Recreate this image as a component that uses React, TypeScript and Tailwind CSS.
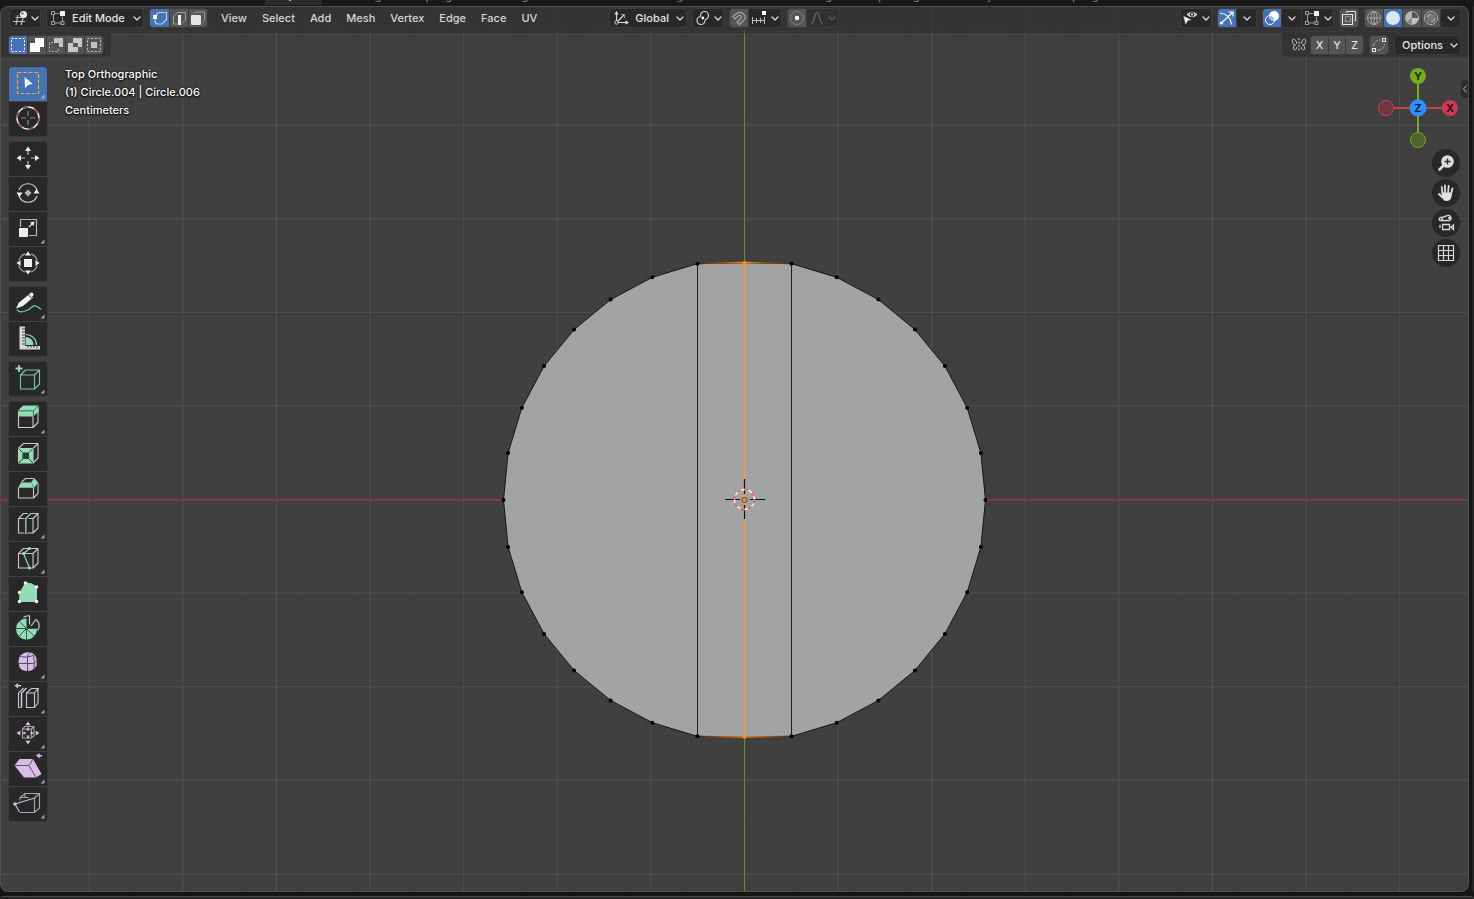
import React from "react";

type Kids = { children?: React.ReactNode };

const GREEN = "#93dcb5";
const LILAC = "#d8bde8";
const WIRE = "#c9c9c9";

/* ---------- shared pieces ---------- */

function Chevron({ dim = false }: { dim?: boolean }) {
  return (
    <svg width="8" height="18" viewBox="0 0 8 18" fill="none" className="shrink-0" aria-hidden="true">
      <path d="M1 8l3 3 3-3" stroke={dim ? "#5c5c5c" : "#d9d9d9"} strokeWidth="1.3" strokeLinecap="round" strokeLinejoin="round" />
    </svg>
  );
}

function Icon({ w = 18, children }: Kids & { w?: number }) {
  return (
    <svg width={w} height="18" viewBox={`0 0 ${w} 18`} fill="none" className="shrink-0" aria-hidden="true">
      {children}
    </svg>
  );
}

function Group({ children, label }: Kids & { label: string }) {
  return (
    <div role="group" aria-label={label} className="flex h-[18px] shrink-0 gap-px overflow-hidden rounded-[3px] bg-[#3a3a3a] ring-1 ring-[#3c3c3c]">
      {children}
    </div>
  );
}

const TONES = {
  blue: "bg-[#4772b3]",
  light: "bg-[#545454]",
  dark: "bg-[#282828]",
  dim: "bg-[#303030]",
};

function Btn({ label, tone = "dark", children, className = "w-[18px]" }: Kids & { label: string; tone?: keyof typeof TONES; className?: string }) {
  return (
    <button type="button" aria-label={label} title={label} className={`flex h-[18px] shrink-0 items-center justify-center ${TONES[tone]} ${className}`}>
      {children}
    </button>
  );
}

/* ---------- header ---------- */

const VertsIcon = () => (
  <Icon>
    <path d="M5.500 4.500h5M4.500 6v6.500M6 14h6.500M13.500 12V7.500" stroke="#9a9a9a" />
    <rect x="2.500" y="2.500" width="3" height="3" stroke="#9a9a9a" />
    <rect x="2.500" y="12.500" width="3" height="3" stroke="#9a9a9a" />
    <rect x="12" y="12.500" width="3" height="3" stroke="#9a9a9a" />
    <rect x="11" y="2" width="5" height="5" fill="#f0f0f0" />
  </Icon>
);

const menus = ["View", "Select", "Add", "Mesh", "Vertex", "Edge", "Face", "UV"];

function Header() {
  return (
    <header className="relative flex h-[27px] items-center bg-[#303030]/75 pb-[3px] pl-[10px] pr-[9px]">
      <Group label="Editor type">
        <Btn label="Editor type" className="w-[30px] gap-[3px]">
          <Icon w={16}>
            <path d="M3.500 8.500h6M1 12.500h12M6 6L4 16M11 9l-2 7" stroke="#bdbdbd" strokeWidth="1.200" />
            <circle cx="11.500" cy="5.500" r="3.500" fill="#ececec" />
            <circle cx="10.500" cy="4.500" r="1.200" fill="#777" />
          </Icon>
          <Chevron />
        </Btn>
      </Group>

      <div className="ml-[7px] flex h-[18px] shrink-0 items-center rounded-[3px] bg-[#282828] px-[2px] ring-1 ring-[#3c3c3c]">
        <VertsIcon />
        <select aria-label="Mode" className="ml-[5px] w-[61px] appearance-none bg-transparent text-[#e3e3e3] outline-none">
          <option>Edit Mode</option>
        </select>
        <Chevron />
      </div>

      <div className="ml-[7px]">
        <Group label="Select mode">
          <Btn label="Vertex select" tone="blue" className="w-[19px]">
            <Icon>
              <path d="M4 8V12q0 3 3 3h4l4.500-4.500V3.500H7.500L4.500 6" stroke="#b9cdec" strokeWidth="1.200" />
              <rect x="2" y="6" width="4" height="4" fill="#fff" />
            </Icon>
          </Btn>
          <Btn label="Edge select" tone="light">
            <Icon>
              <path d="M7 15H3.500V7l4-3.500h8V11L12 14.500" stroke="#9b9b9b" />
              <rect x="8" y="6" width="3" height="10" fill="#f2f2f2" />
            </Icon>
          </Btn>
          <Btn label="Face select" tone="light">
            <Icon>
              <path d="M4 5.500L6.500 3h9v8.500L13 14" stroke="#9b9b9b" />
              <rect x="2" y="6" width="10" height="10" rx="1" fill="#e4e4e4" />
            </Icon>
          </Btn>
        </Group>
      </div>

      <nav aria-label="Mesh editing menus" className="ml-[7px] flex gap-px">
        {menus.map((m) => (
          <button type="button" key={m} className="h-[18px] px-[7px]">{m}</button>
        ))}
      </nav>

      <div className="ml-[66px] flex gap-[7px]">
        <div className="flex h-[18px] items-center rounded-[3px] bg-[#282828] pl-[3px] pr-[2px] ring-1 ring-[#3c3c3c]">
          <Icon>
            <path d="M3.500 13.500V4M2 5.500L3.500 3 5 5.500M3.500 13.500H14M12.500 12l2.500 1.500-2.500 1.500M3.500 13.500L11 6" stroke="#dedede" strokeWidth="1.100" />
            <path d="M8 5.500h3.500V9" stroke="#9c9c9c" />
            <circle cx="3.500" cy="13.500" r="1.700" fill="#282828" stroke="#dedede" />
          </Icon>
          <select aria-label="Transform orientation" className="ml-1 w-[41px] appearance-none bg-transparent text-[#e3e3e3] outline-none">
            <option>Global</option>
          </select>
          <Chevron />
        </div>

        <Group label="Pivot point">
          <Btn label="Pivot point" className="w-[30px] gap-1">
            <Icon w={15}>
              <circle cx="9.500" cy="6.500" r="4" stroke="#d8d8d8" strokeWidth="1.200" />
              <circle cx="6" cy="11.500" r="4" stroke="#d8d8d8" strokeWidth="1.200" />
              <circle cx="7.800" cy="9" r="2.500" fill="#282828" />
              <circle cx="7.800" cy="9" r="1.400" fill="#fff" />
            </Icon>
            <Chevron />
          </Btn>
        </Group>

        <Group label="Snapping">
          <Btn label="Snap" tone="light">
            <Icon>
              <path d="M3 7.500L7 4.200Q11 2 14 5.500T13 12L9.500 15.500 7 13l3.800-3.500Q12 8 11 7T8.500 6.800L5 10Z" stroke="#a9a9a9" strokeWidth="1.200" strokeLinejoin="round" />
            </Icon>
          </Btn>
          <Btn label="Snap to increment" className="w-[32px] gap-1">
            <Icon w={16}>
              <path d="M1.500 8v7M13.500 8v7M5.500 9v5M9.500 9v5M1.500 11.500h12" stroke="#bcbcbc" />
              <rect x="11" y="2" width="4" height="4" fill="#fff" />
            </Icon>
            <Chevron />
          </Btn>
        </Group>

        <Group label="Proportional editing">
          <Btn label="Proportional editing" tone="light">
            <Icon>
              <circle cx="9" cy="9" r="6.500" stroke="#858585" />
              <circle cx="9" cy="9" r="2.200" fill="#fff" />
            </Icon>
          </Btn>
          <Btn label="Falloff" tone="dim" className="w-[31px] gap-1">
            <Icon w={14}>
              <path d="M1 15C4.500 14 4.500 3.500 7 3.500S9.500 14 13 15" stroke="#6a6a6a" strokeWidth="1.200" />
            </Icon>
            <Chevron dim />
          </Btn>
        </Group>
      </div>

      <div className="ml-auto flex gap-[7px]">
        <Group label="Object visibility">
          <Btn label="Object visibility" className="w-[30px] gap-1">
            <Icon w={15}>
              <path d="M3.500 5.500Q9 0 14.500 5.500 9 11 3.500 5.500Z" fill="#e2e2e2" />
              <circle cx="9" cy="5.500" r="2.300" fill="#282828" />
              <circle cx="9" cy="5.500" r="1" fill="#fff" />
              <path d="M0 6.500L9 11 5 11.800 2.500 16Z" fill="#f0f0f0" stroke="#282828" strokeWidth=".5" />
            </Icon>
            <Chevron />
          </Btn>
        </Group>

        <Group label="Gizmos">
          <Btn label="Show gizmos" tone="blue">
            <Icon>
              <path d="M2 4Q12 5 13.500 15.500M4 13.500L14.500 3.500M10.500 3h4.500v4.500" stroke="#fff" strokeWidth="1.200" />
              <circle cx="3.500" cy="14" r="1.500" fill="#fff" />
            </Icon>
          </Btn>
          <Btn label="Gizmo settings" className="w-[19px]"><Chevron /></Btn>
        </Group>

        <Group label="Overlays">
          <Btn label="Show overlays" tone="blue">
            <Icon>
              <circle cx="11" cy="7" r="5" fill="#fff" />
              <path d="M6.300 6.300A5 5 0 0 0 11.700 11.700 5 5 0 0 0 6.300 6.300Z" fill="#9fb9e0" />
              <circle cx="7" cy="11" r="4.500" stroke="#fff" />
            </Icon>
          </Btn>
          <Btn label="Overlay settings" className="w-[19px]"><Chevron /></Btn>
          <Btn label="Mesh edit overlays" className="w-[31px] gap-[3px]">
            <VertsIcon />
            <Chevron />
          </Btn>
        </Group>

        <Group label="X-ray">
          <Btn label="Toggle X-ray" tone="light">
            <Icon>
              <path d="M6.500 4V2.500h9v9H14" stroke="#dcdcdc" />
              <rect x="2.500" y="5.500" width="10" height="10" stroke="#e6e6e6" />
              <path d="M5.500 12.500v-5h5v5Z" stroke="#a9a9a9" strokeDasharray="2 1" />
            </Icon>
          </Btn>
        </Group>

        <Group label="Viewport shading">
          <Btn label="Wireframe" tone="light">
            <Icon>
              <circle cx="9" cy="9" r="6.500" stroke="#a8a8a8" />
              <path d="M2.500 9h13M9 2.500v13" stroke="#a8a8a8" />
              <ellipse cx="9" cy="9" rx="3" ry="6.500" stroke="#a8a8a8" />
            </Icon>
          </Btn>
          <Btn label="Solid" tone="blue">
            <Icon><circle cx="9" cy="9" r="7" fill="#dbe5f5" /></Icon>
          </Btn>
          <Btn label="Material preview" tone="light">
            <Icon>
              <circle cx="9" cy="9" r="6.500" stroke="#ababab" />
              <path d="M9 9V2.500A6.500 6.500 0 0 0 4 13.200Z" fill="#b4b4b4" />
              <path d="M9 9h6.500A6.500 6.500 0 0 1 4.500 13.500Z" fill="#8a8a8a" />
              <path d="M9 9v6.500A6.500 6.500 0 0 0 15.500 9Z" fill="#c2c2c2" />
            </Icon>
          </Btn>
          <Btn label="Rendered" tone="light">
            <Icon>
              <circle cx="9" cy="9" r="6.500" stroke="#b4b4b4" />
              <circle cx="9" cy="9" r="4.800" fill="#777" />
              <path d="M5.500 8Q6 5.500 8.500 5.500M13 9.500Q12.500 12.500 9.500 13" stroke="#c4c4c4" />
            </Icon>
          </Btn>
          <Btn label="Shading settings" className="w-[19px]"><Chevron /></Btn>
        </Group>
      </div>
    </header>
  );
}

function ToolSettings() {
  return (
    <div className="relative flex h-6 items-start justify-between">
      <div className="flex h-6 items-center rounded-br-md bg-[#303030]/75 pl-[9px] pr-2">
        <Group label="Selection operation">
          <Btn label="New selection" tone="blue">
            <Icon><rect x="2.500" y="2.500" width="13" height="13" stroke="#fff" strokeDasharray="2 1.700" /></Icon>
          </Btn>
          <Btn label="Extend" tone="light">
            <Icon><path d="M7 2h9v9h-4v5H2V7h5Z" fill="#fff" /></Icon>
          </Btn>
          <Btn label="Subtract" tone="light">
            <Icon>
              <path d="M7 2h9v9h-4V7H7Z" fill="#c4c4c4" />
              <path d="M6 6.500H2.500v9h9V12" stroke="#b5b5b5" strokeDasharray="2 1.700" />
            </Icon>
          </Btn>
          <Btn label="Invert" tone="light">
            <Icon><path fillRule="evenodd" d="M7 2h9v9h-4v5H2V7h5ZM7 7v4h5V7Z" fill="#c8c8c8" /></Icon>
          </Btn>
          <Btn label="Intersect" tone="light">
            <Icon>
              <rect x="6" y="6" width="6" height="6" fill="#c4c4c4" />
              <rect x="2.500" y="2.500" width="13" height="13" stroke="#c4c4c4" strokeDasharray="2 1.700" />
            </Icon>
          </Btn>
        </Group>
      </div>

      <div className="flex h-6 items-center gap-[7px] rounded-bl-md bg-[#303030]/75 pl-2 pr-[9px]">
        <div className="flex items-center gap-[3px]">
          <Icon>
            <path d="M7 8Q6.500 3.500 3.500 3 1.500 3 2.500 6.500 3 9 5.500 9 2.500 9.500 3.500 13q2 3 3.500-2M11 8q.5-4.500 3.500-5 2 0 1 3.500-.5 2.500-3 2.500 3 .5 2 4-2 3-3.500-2" stroke="#bdbdbd" />
            <path d="M9 2v14" stroke="#dcdcdc" strokeDasharray="2 1.500" />
          </Icon>
          <Group label="Mirror axes">
            <Btn label="X" tone="light" className="w-[17px] text-[#e3e3e3]">X</Btn>
            <Btn label="Y" tone="light" className="w-4 text-[#e3e3e3]">Y</Btn>
            <Btn label="Z" tone="light" className="w-[17px] text-[#e3e3e3]">Z</Btn>
          </Group>
        </div>
        <Group label="Auto merge">
          <Btn label="Auto merge" tone="light">
            <Icon>
              <rect x="2.500" y="12.500" width="3" height="3" stroke="#e8e8e8" />
              <rect x="12.500" y="2.500" width="3" height="3" stroke="#e8e8e8" />
              <path d="M3.500 10Q4 4.500 10.500 4M7.500 14.500Q14 13.500 14.500 8" stroke="#b0b0b0" strokeDasharray="3 1.500" />
            </Icon>
          </Btn>
        </Group>
        <button type="button" className="flex h-[18px] w-[65px] items-center justify-between rounded-[3px] bg-[#282828] pl-[7px] pr-[2px] text-[#e3e3e3] ring-1 ring-[#3c3c3c]">
          Options
          <Chevron />
        </button>
      </div>
    </div>
  );
}

/* ---------- toolbar ---------- */

/* Outline of a cube: front face at (x, y) with side s, back face shifted by d. */
function Cube({ x = 9.5, y = 11.5, s = 14.5, d = 5, c = WIRE }: { x?: number; y?: number; s?: number; d?: number; c?: string }) {
  return (
    <path
      d={`M${x} ${y}h${s}v${s}h${-s}ZM${x} ${y}l${d} ${-d}h${s}l${-d} ${d}M${x + s + d} ${y - d}v${s}l${-d} ${d}`}
      stroke={c}
      strokeWidth="1.1"
      strokeLinejoin="round"
    />
  );
}

/* Four arrow heads around (cx, cy), with the tips at radius r. */
function Arrows({ cx, cy, r, h, w, c }: { cx: number; cy: number; r: number; h: number; w: number; c: string }) {
  return (
    <g fill={c}>
      {[0, 90, 180, 270].map((a) => (
        <path key={a} transform={`rotate(${a} ${cx} ${cy})`} d={`M${cx} ${cy - r}l${w} ${h}h${-2 * w}Z`} />
      ))}
    </g>
  );
}

type Tool = { name: string; more?: boolean; active?: boolean; art: React.ReactNode };

const toolGroups: Tool[][] = [
  [
    {
      name: "Select Box", more: true, active: true,
      art: (
        <>
          <rect x="8.500" y="5.500" width="21" height="21" stroke="#f3a83b" strokeWidth="1.200" strokeDasharray="4 1.600" />
          <path d="M15.500 10L24 17l-4.500.7-3.500 3.500Z" fill="#f2f2f2" />
        </>
      ),
    },
    {
      name: "Cursor",
      art: (
        <>
          <circle cx="19" cy="16" r="11" stroke="#efefef" strokeWidth="1.400" />
          <circle cx="19" cy="16" r="11" stroke="#a04a50" strokeWidth="1.600" strokeDasharray="5.760 5.760" />
          <path d="M12 16h5M21 16H26M19 9v5M19 18V23" stroke="#8a8a8a" strokeWidth="1.200" />
        </>
      ),
    },
  ],
  [
    {
      name: "Move",
      art: (
        <>
          <Arrows cx={19} cy={16} r={11.5} h={4.5} w={3} c="#ececec" />
          <path d="M19 9v4M19 19v4M12 16h4M22 16h4" stroke="#bdbdbd" strokeWidth="1.200" />
        </>
      ),
    },
    {
      name: "Rotate",
      art: (
        <>
          <path d="M10 13A9.600 9.600 0 0 1 28 13M28 19A9.600 9.600 0 0 1 10 19" stroke="#cfcfcf" strokeWidth="1.200" />
          <path d="M19 12.500L22.500 16 19 19.500 15.500 16Z" fill="#b2b2b2" />
          <path d="M7.500 15.500h6L10.500 20ZM24.500 16.500h6L27.500 12Z" fill="#f0f0f0" />
        </>
      ),
    },
    {
      name: "Scale", more: true,
      art: (
        <>
          <path d="M11.500 15V7.500h16v16H20" stroke="#b5b5b5" strokeWidth="1.200" />
          <rect x="10" y="16" width="9" height="9" fill="#ededed" />
          <path d="M20 15l4-4" stroke="#e0e0e0" strokeWidth="1.200" />
          <path d="M25.500 9.500l-1 4.500-3.500-3.500Z" fill="#efefef" />
        </>
      ),
    },
    {
      name: "Transform",
      art: (
        <>
          <circle cx="19" cy="16" r="9.500" stroke="#b5b5b5" strokeWidth="1.100" strokeDasharray="8.900 6" strokeDashoffset="-3" />
          <rect x="15" y="12" width="8" height="8" fill="#f0f0f0" />
          <Arrows cx={19} cy={16} r={11.5} h={4} w={3} c="#ececec" />
        </>
      ),
    },
  ],
  [
    {
      name: "Annotate", more: true,
      art: (
        <>
          <path d="M8 22.500Q10 26 15 24.500T23 20 32 22.500" stroke="#72c8a0" strokeWidth="1.300" />
          <path d="M20.500 7l3.500 3.500-10 8.500L7 21.500l3-6Z" fill="#efefef" />
          <path d="M19.500 8l3.500 3.500" stroke="#282828" />
          <circle cx="22.500" cy="7.500" r="2" fill="#efefef" />
        </>
      ),
    },
    {
      name: "Measure",
      art: (
        <>
          <path d="M10.500 4.500H16v19.500h15v3.500H10.500Z" fill="#d8d8d8" />
          <path d="M13 7h3M13 10h3M13 13h3M13 16h3M13 19h3M13 22h3M19 24v2M22 24v2M25 24v2M28 24v2" stroke="#444" />
          <path d="M16.500 23V15A8 8 0 0 1 24.500 23Z" fill={GREEN} />
          <path d="M16.500 12.500A10.500 10.500 0 0 1 27.500 23" stroke={GREEN} strokeWidth="1.200" />
        </>
      ),
    },
  ],
  [
    {
      name: "Add Cube", more: true,
      art: (
        <>
          <Cube x={11.5} y={13} s={14} c="#7cc7a1" />
          <path d="M6.500 6.500h7M10 3v7" stroke={GREEN} strokeWidth="1.800" />
        </>
      ),
    },
  ],
  [
    {
      name: "Extrude Region", more: true,
      art: (
        <>
          <Cube x={9.5} y={11} s={14.5} />
          <path d="M9 8.500L14 3.500H29.500V9.500L24.500 14.500H9Z" fill={GREEN} />
          <path d="M9 8.800H24.500V14.500M24.500 8.800L29 4" stroke="#3f6b56" />
        </>
      ),
    },
    {
      name: "Inset Faces",
      art: (
        <>
          <Cube />
          <rect x="9.500" y="11.500" width="14.500" height="14.500" fill={GREEN} />
          <rect x="13.500" y="15.500" width="6.500" height="6.500" fill="#2c3d35" />
          <path d="M9.500 11.500l4 4M24 11.500l-4 4M9.500 26l4-4M24 26l-4-4" stroke="#2c3d35" />
        </>
      ),
    },
    {
      name: "Bevel",
      art: (
        <>
          <path d="M9.500 15.500v10.500h15V15.500M24.500 26l4.500-4.500V11M12.500 10l4-3.500h8.500" stroke={WIRE} strokeWidth="1.100" />
          <path d="M9 15.800L12 10.500h10l3 5.300Z" fill={GREEN} />
          <path d="M22 10.200L25.500 6.200 29 10.200 25.500 15.800Z" fill={GREEN} />
        </>
      ),
    },
    {
      name: "Loop Cut", more: true,
      art: (
        <>
          <Cube />
          <path d="M16.800 11.500v14.500M16.800 11.500l5-5" stroke="#282828" strokeWidth="4" />
          <path d="M16.800 26.500V11.500l5-5" stroke={GREEN} strokeWidth="1.300" />
        </>
      ),
    },
    {
      name: "Knife", more: true,
      art: (
        <>
          <Cube />
          <path d="M20.500 6.500L14.500 11.500 20.500 26" stroke={GREEN} strokeWidth="1.200" />
          <circle cx="20.500" cy="6.500" r="1.600" fill={GREEN} />
          <circle cx="14.500" cy="11.500" r="1.600" fill={GREEN} />
          <circle cx="20.500" cy="26" r="1.600" fill={GREEN} />
        </>
      ),
    },
    {
      name: "Poly Build",
      art: (
        <>
          <path d="M16.500 6Q23 5.500 27.500 10V24.500H10.500L11 15.500Z" fill={GREEN} stroke={GREEN} />
          {[[16.5, 6], [27.5, 10], [27.5, 24.5], [10.5, 24.5], [10.5, 15.5]].map(([x, y]) => (
            <circle key={`${x}-${y}`} cx={x} cy={y} r="1.800" fill="#f2f2f2" />
          ))}
        </>
      ),
    },
    {
      name: "Spin",
      art: (
        <>
          <path d="M17.500 16.500V6.500A10.500 10.500 0 1 0 28 17Z" fill={GREEN} />
          <path d="M17.500 16.500V27.500M17.500 16.500H7M17.500 16.500H28M17.500 16.500L25 24M17.500 16.500L10 24M17.500 16.500L10 9" stroke="#35594a" />
          <path d="M14.500 5.500Q17 3.500 20.500 3.800V12.500M22 14L27 7.500Q31 11 30 15.500L28.500 18.500" stroke={WIRE} strokeWidth="1.200" />
        </>
      ),
    },
    {
      name: "Smooth", more: true,
      art: (
        <>
          <path d="M14 6.500Q19 4 24 6.500 29 10 27.500 19 24.500 24 18.500 24T10.500 20Q8.500 13 11 9Z" fill={LILAC} />
          <path d="M10 9Q14 10.500 18 10T25 8M18.500 10v14M9 16.500H24.500M18.500 10Q19 7 21 5.500M24.500 8.500Q26 14 25 22M24.500 16.500l4-3" stroke="#544a5c" />
        </>
      ),
    },
    {
      name: "Edge Slide", more: true,
      art: (
        <>
          <path d="M17.500 11h8v14.500h-8ZM17.500 11l5-4.500h6.500L25.500 11M29 6.500V21l-3.500 4.500M11.500 25.500H9.500V11l5-5" stroke={WIRE} strokeWidth="1.100" />
          <path d="M12.500 25.500V11l5-5" stroke={LILAC} strokeWidth="1.600" />
          <path d="M5.500 3.700L9 1v2h3v1.400H9v2Z" fill={LILAC} />
        </>
      ),
    },
    {
      name: "Shrink/Fatten", more: true,
      art: (
        <>
          <Cube x={13.5} y={12} s={9} d={2.5} c="#a5a5a5" />
          <Arrows cx={19} cy={16} r={11.5} h={3.8} w={2.6} c={LILAC} />
          <Arrows cx={19} cy={16} r={6.5} h={4} w={1.6} c={LILAC} />
        </>
      ),
    },
    {
      name: "Shear", more: true,
      art: (
        <>
          <path d="M5.500 13.500L10.500 7H24L32.500 22 27 25.500H15Z" fill={LILAC} />
          <path d="M5.500 13.500H20L24 7M20 13.500L27 25.500" stroke="#5d5166" />
          <path d="M27 3.500L30.500 1v2H33v1.400h-2.500v2Z" fill={LILAC} />
        </>
      ),
    },
    {
      name: "Rip Region", more: true,
      art: (
        <>
          <path d="M11 13.500V10.500L16 6.500H30.500V21L25.500 25.500H11M16 6.500V10M25.500 11v14.500M25.500 11l5-4.500M11 10.500h9" stroke="#aaa" strokeWidth="1.100" />
          <path d="M25.500 11L6 17l4.500 8" stroke={LILAC} strokeWidth="1.100" />
          <circle cx="6" cy="17" r="1.800" fill={LILAC} />
        </>
      ),
    },
  ],
];

function Toolbar() {
  return (
    <aside aria-label="Tools" className="flex w-[38px] flex-col gap-[6px]">
      {toolGroups.map((g) => (
        <div key={g[0].name} className="flex flex-col gap-px overflow-hidden rounded-[3px] bg-[#414141] ring-1 ring-[#3a3a3a]">
          {g.map((t) => (
            <button type="button" key={t.name} aria-label={t.name} title={t.name} className={t.active ? "bg-[#4772b3]" : "bg-[#282828]"}>
              <svg viewBox="0 0 38 34" fill="none" className="block w-full" aria-hidden="true">
                {t.art}
                {t.more && <path d="M35.500 27.500v4h-4Z" fill={t.active ? "#9ab3dc" : "#a0a0a0"} />}
              </svg>
            </button>
          ))}
        </div>
      ))}
    </aside>
  );
}

/* ---------- navigation ---------- */

function AxisGizmo() {
  return (
    <svg width="80" height="80" viewBox="0 0 80 80" fill="none" aria-label="View axes" className="font-bold">
      <path d="M8 40H72" stroke="#cd3b54" strokeWidth="2" />
      <path d="M40 8V72" stroke="#76ad1c" strokeWidth="2" />
      <circle cx="8" cy="40" r="7.500" fill="#6c383f" stroke="#cd3b54" />
      <circle cx="40" cy="72" r="7.500" fill="#50632c" stroke="#76ad1c" />
      <circle cx="40" cy="8" r="8" fill="#76ad1c" />
      <circle cx="72" cy="40" r="8" fill="#cd3b54" />
      <circle cx="40" cy="40" r="8.500" fill="#2f8fff" />
      <g fontSize="11" textAnchor="middle">
        <text x="40" y="12" fill="#1d2b06">Y</text>
        <text x="40" y="44" fill="#0b2440">Z</text>
        <text x="72" y="44" fill="#330e15">X</text>
      </g>
    </svg>
  );
}

const navButtons: { name: string; art: React.ReactNode }[] = [
  {
    name: "Zoom",
    art: (
      <>
        <path d="M11 17l-3.500 3.500" stroke="#dcdcdc" strokeWidth="2.600" strokeLinecap="round" />
        <circle cx="15.500" cy="12.500" r="6.300" fill="#dcdcdc" />
        <path d="M15.500 9.500v6M12.500 12.500h6" stroke="#282828" strokeWidth="1.300" />
      </>
    ),
  },
  {
    name: "Pan",
    art: (
      <>
        <path d="M10.500 15L9.800 8M13 14V6.500M16 14l.7-7M19 15l1.500-5.500M10.500 18.500L7 15" stroke="#e0e0e0" strokeWidth="1.800" strokeLinecap="round" />
        <path d="M9.500 13.500h10q1 4-1.500 7.500-4 2-6.500 0-2-3.500-2-7.500Z" fill="#e0e0e0" />
      </>
    ),
  },
  {
    name: "Camera view",
    art: (
      <>
        <path d="M7 10.500a2.500 2.500 0 0 1 3.500-2L15 6.700a2.700 2.700 0 1 1 2.500 4.800H9.500A2.500 2.500 0 0 1 7 10.500Z" stroke="#d6d6d6" strokeWidth="1.400" />
        <circle cx="10" cy="10.300" r="1" fill="#d6d6d6" />
        <circle cx="17.300" cy="9" r="1.300" fill="#d6d6d6" />
        <path d="M10.500 15.500h7v5h-7ZM8 16v3M21.500 16v4.500L19 18.200Z" stroke="#d6d6d6" strokeWidth="1.300" />
      </>
    ),
  },
  {
    name: "Toggle orthographic",
    art: <path d="M6.500 6.500h15v15h-15ZM6.500 11.500h15M6.500 16.500h15M11.500 6.500v15M16.500 6.500v15" stroke="#d8d8d8" strokeWidth="1.200" />,
  },
];

function Navigation() {
  return (
    <div className="flex flex-col items-end gap-px">
      <div className="flex items-start pt-px">
        <div className="pr-[3px]"><AxisGizmo /></div>
        <button type="button" aria-label="Open sidebar" className="mt-3 flex h-[18px] w-2 items-center justify-center rounded-l bg-[#2c2c2c]">
          <svg width="6" height="10" viewBox="0 0 6 10" fill="none" aria-hidden="true">
            <path d="M4.500 1.500L1.500 5l3 3.500" stroke="#b8b8b8" />
          </svg>
        </button>
      </div>
      <div className="flex flex-col gap-[2px] pr-[9px]">
        {navButtons.map((n) => (
          <button type="button" key={n.name} aria-label={n.name} title={n.name} className="size-7 rounded-full bg-[#282828]">
            <svg width="28" height="28" viewBox="0 0 28 28" fill="none" aria-hidden="true">{n.art}</svg>
          </button>
        ))}
      </div>
    </div>
  );
}

/* ---------- 3D scene ---------- */

const CX = 744.5;
const CY = 500;
const STEP = 93.6;

/* 32-segment circle whose top and bottom vertices were flattened. */
const ring: [number, number][] = Array.from({ length: 32 }, (_, i) => {
  const a = (i * Math.PI) / 16;
  const y = i === 8 ? 237 : i === 24 ? -237 : 241 * Math.sin(a);
  return [CX + 241 * Math.cos(a), CY + y] as [number, number];
});

function gridLines(origin: number, step: number, min: number, max: number) {
  const out: number[] = [];
  for (let i = Math.ceil((min - origin) / step); origin + i * step <= max; i++) {
    if (i !== 0) out.push(Math.round((origin + i * step) * 100) / 100);
  }
  return out;
}

const gridPath = (step: number) =>
  gridLines(CX, step, 0, 1469).map((x) => `M${x} 0V900`).join("") +
  gridLines(499.5, step, 0, 900).map((y) => `M0 ${y}H1469`).join("");

function Scene() {
  return (
    <svg viewBox="0 6 1469 886" preserveAspectRatio="xMidYMid slice" fill="none" className="absolute inset-0 size-full" role="img" aria-label="Circle mesh seen from the top">
      <path d={gridPath(STEP / 10)} stroke="#444444" />
      <path d={gridPath(STEP)} stroke="#515151" />
      <rect x="0" y="499" width="1469" height="1.500" fill="#a03442" />
      <rect x="744" y="0" width="1" height="900" fill="#67901f" />
      <polygon points={ring.map((p) => p.join(",")).join(" ")} fill="#a2a3a4" stroke="#161616" />
      <path d="M697.500 263.500V736.500M791.500 263.500V736.500" stroke="#202020" />
      <defs>
        <linearGradient id="sel" x1="697" x2="792" y1="0" y2="0" gradientUnits="userSpaceOnUse">
          <stop offset="0" stopColor="#3a2a1c" />
          <stop offset=".5" stopColor="#ff8a1a" />
          <stop offset="1" stopColor="#3a2a1c" />
        </linearGradient>
      </defs>
      <path d="M697.500 263.500L744.500 262.500 791.500 263.500" stroke="url(#sel)" strokeWidth="1.300" />
      <path d="M697.500 736.500L744.500 737 791.500 736.500" stroke="url(#sel)" strokeWidth="1.600" />
      <path d="M744.500 263V737" stroke="#ff9a1f" strokeWidth="1.400" />
      {ring.map(([x, y], i) => (
        <circle key={i} cx={x} cy={y} r="2" fill={i === 8 || i === 24 ? "#ff8514" : "#000"} />
      ))}
      <path d="M725 499.500H740M750 499.500H765M744.500 479V494M744.500 505V519" stroke="#111" strokeWidth="1.200" />
      <circle cx="744.500" cy="499.500" r="10" stroke="#f2f2f2" strokeWidth="1.300" />
      <circle cx="744.500" cy="499.500" r="10" stroke="#ef4a55" strokeWidth="1.500" strokeDasharray="3.930 3.930" />
      <circle cx="744.500" cy="500" r="2.500" fill="#ff9420" stroke="#6e481f" />
    </svg>
  );
}

const workspaces = ["Layout", "Modeling", "Sculpting", "UV Editing", "Texture Paint", "Shading", "Animation", "Rendering", "Compositing", "Geometry Nodes", "Scripting"];

export default function App() {
  return (
    <div className="flex h-screen flex-col overflow-hidden bg-[#151515] font-['Inter','Liberation_Sans',sans-serif] text-[11px] font-medium leading-[18px] text-[#d6d6d6]">
      <nav aria-label="Workspaces" className="flex h-[6px] shrink-0 items-end overflow-hidden bg-[#181818] pl-[265px] font-normal">
        {workspaces.map((w, i) => (
          <button type="button" key={w} className={`h-[18px] shrink-0 px-[11px] pb-[2px] leading-[14px] ${i === 0 ? "mb-px bg-[#2b2b2b] text-[#e8e8e8]" : "text-[#8c8c8c]"}`}>
            {w}
          </button>
        ))}
      </nav>

      <main className="flex min-h-0 flex-1 gap-[3px]">
        <section aria-label="3D viewport" className="relative flex min-w-0 flex-1 flex-col overflow-hidden rounded-lg bg-[#3f3f3f]">
          <Scene />
          <Header />
          <ToolSettings />
          <div className="relative flex flex-1 items-start justify-between pl-[9px]">
            <div className="flex items-start gap-[18px]">
              <div className="pt-[10px]"><Toolbar /></div>
              <div className="pt-2 text-white [text-shadow:0_1px_2px_#000,0_0_2px_#000]">
                <p>Top Orthographic</p>
                <p>(1) Circle.004 | Circle.006</p>
                <p>Centimeters</p>
              </div>
            </div>
            <div className="pt-[10px]"><Navigation /></div>
          </div>
          <div className="pointer-events-none absolute inset-0 rounded-lg border border-[#515151]" />
        </section>
        <div className="w-[2px] shrink-0 rounded-l bg-[#262626]" />
      </main>

      <footer className="flex h-[7px] shrink-0 items-end">
        <div className="h-[3px] flex-1 rounded-t border-t border-[#474747] bg-[#262626]" />
      </footer>
    </div>
  );
}
